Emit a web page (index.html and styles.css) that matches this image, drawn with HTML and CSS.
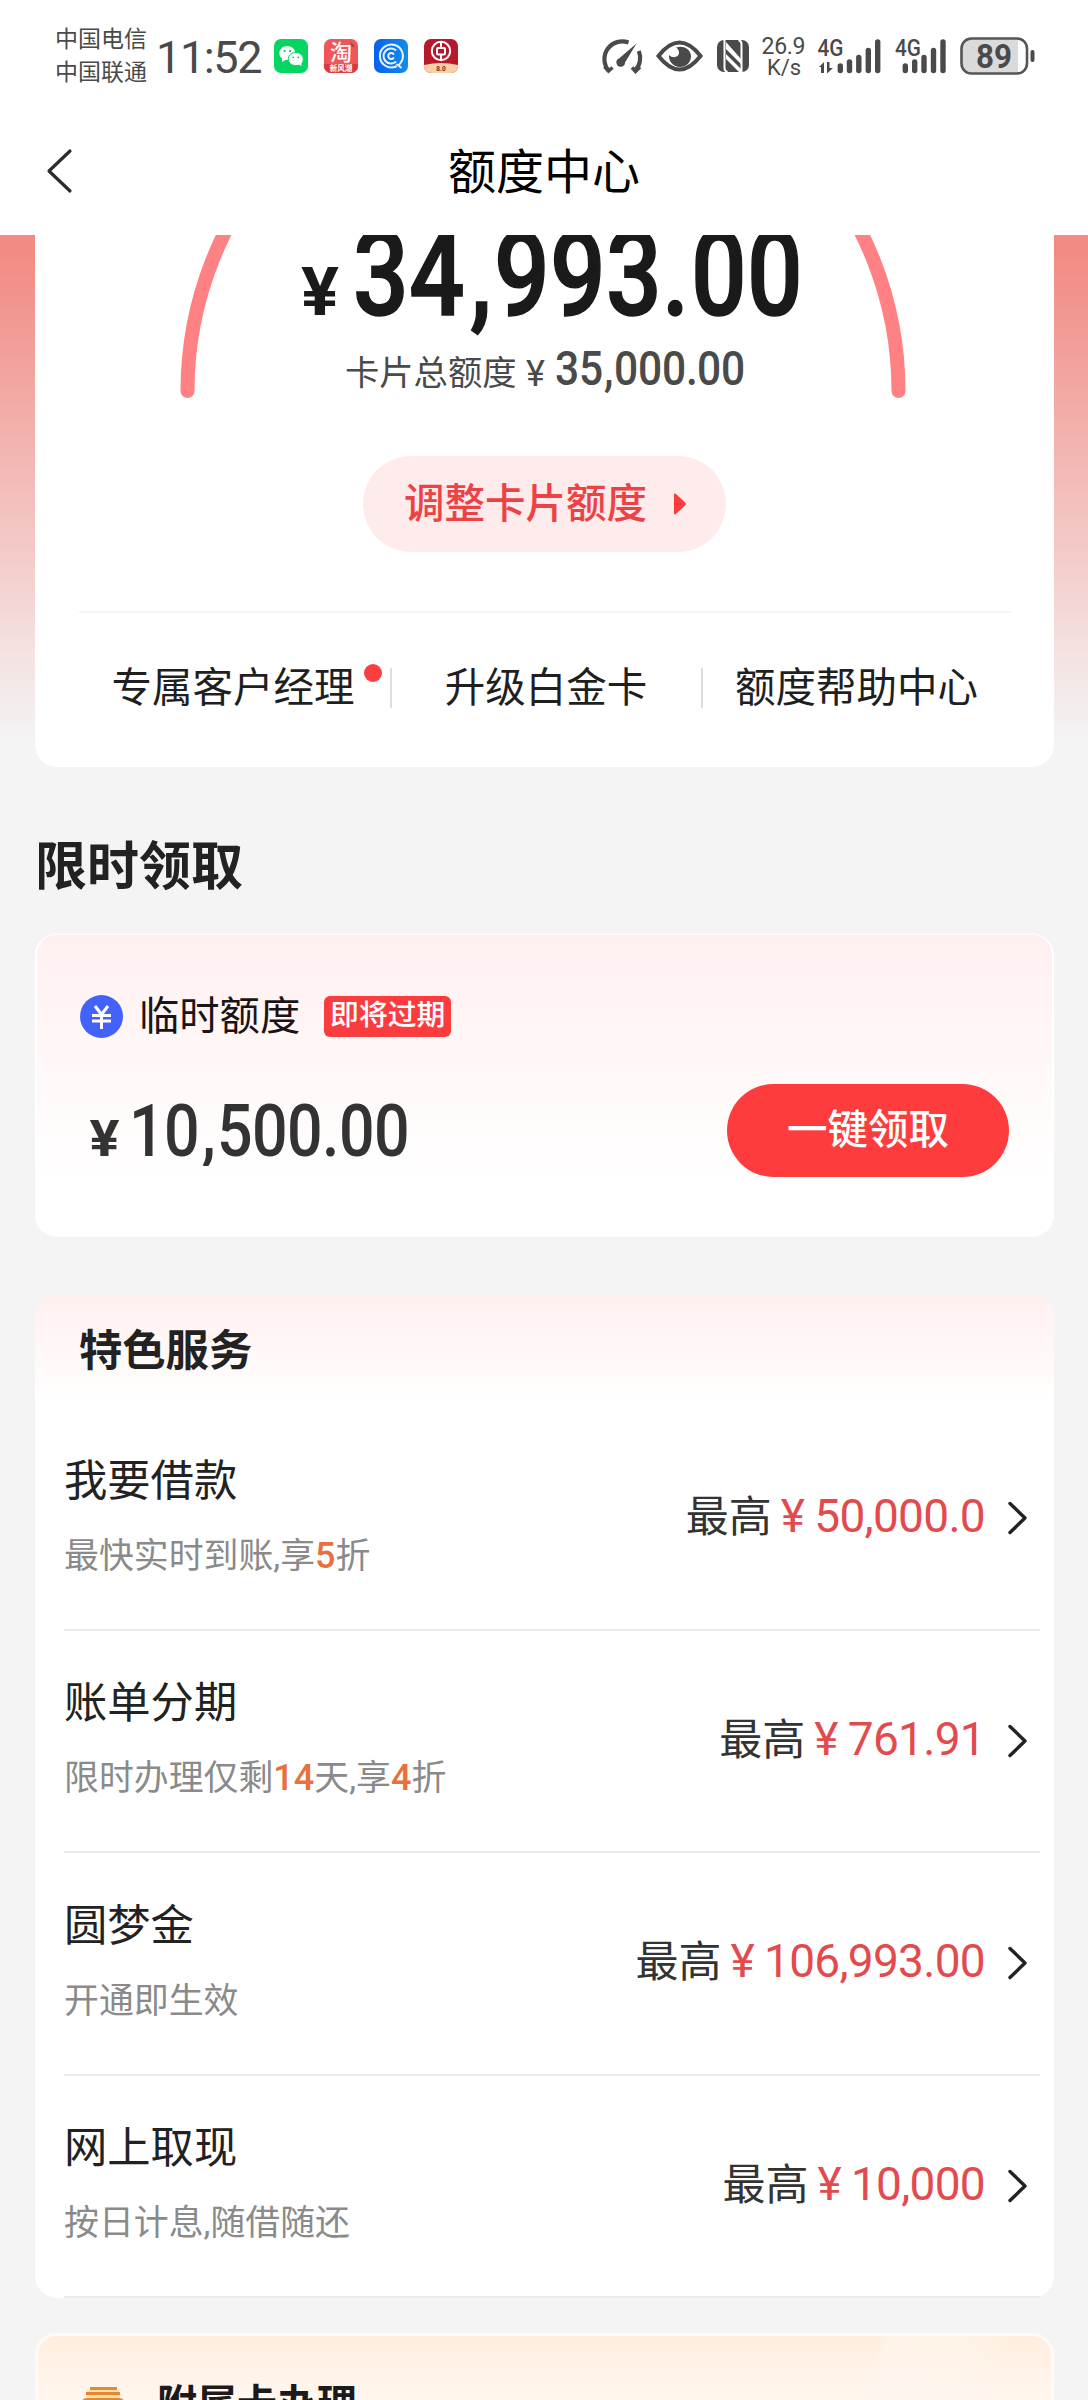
FILE: index.html
```html
<!DOCTYPE html>
<html lang="zh-CN">
<head>
<meta charset="utf-8">
<title>额度中心</title>
<link rel="stylesheet" href="styles.css">
</head>
<body>
<div class="screen">
  <header class="top">
    <div class="status">
      <div class="carriers"><span>中国电信</span><span>中国联通</span></div>
      <div class="clock">11:52</div>
      <div class="apps">
        <svg width="34" height="34" viewBox="0 0 34 34"><rect width="34" height="34" rx="7" fill="#07d562"/><ellipse cx="13.200" cy="14" rx="8" ry="7" fill="#fff"/><path d="M8 19v4l5-3z" fill="#fff"/><ellipse cx="21.800" cy="20" rx="7.600" ry="6.600" fill="#fff" stroke="#07d562"/><path d="M24 25l3.500 2v-4z" fill="#fff"/><g fill="#07c45b"><circle cx="10.500" cy="12" r="1.100"/><circle cx="16" cy="12" r="1.100"/><circle cx="19.400" cy="18.300" r=".9"/><circle cx="24.200" cy="18.300" r=".9"/></g></svg>
        <svg width="34" height="34" viewBox="0 0 34 34"><rect width="34" height="34" rx="7" fill="#f0555a"/><path d="M0 25h34v2a7 7 0 0 1-7 7H7a7 7 0 0 1-7-7z" fill="#d93a40"/><path d="M26 3l5 4-3 1z" fill="#96453c"/><text class="glyph" x="17" y="21" font-size="22" text-anchor="middle" font-weight="500">淘</text><text class="glyph" x="17" y="32" font-size="7.500" text-anchor="middle" font-weight="700">新风潮</text></svg>
        <svg width="34" height="34" viewBox="0 0 34 34"><defs><linearGradient id="blue"><stop stop-color="#0761f2"/><stop offset="1" stop-color="#118dea"/></linearGradient></defs><rect width="34" height="34" rx="7" fill="url(#blue)"/><g fill="none" stroke="#e6f5fd" stroke-width="2" stroke-linecap="round"><path d="M22 27.500A11.500 11.500 0 1 1 26.500 24l-1.500 2"/><path d="M21.500 23a7.500 7.500 0 1 1 0-12"/><path d="M19.500 19a3 3 0 1 1 0-4"/><path d="M23 25.500l4 3"/></g></svg>
        <svg width="34" height="34" viewBox="0 0 34 34"><rect width="34" height="34" rx="7" fill="#b8182b"/><path d="M0 26q17-4 34 0v1a7 7 0 0 1-7 7H7a7 7 0 0 1-7-7z" fill="#f7d0a5"/><g fill="none" stroke="#fff" stroke-width="2"><circle cx="17" cy="12" r="9.200"/><rect x="13" y="9" width="8" height="6.500" rx="1"/><path d="M17 3v6M17 15.500v6"/></g><text x="17" y="31.500" font-size="6.500" text-anchor="middle" font-weight="700" fill="#7c2a20">8.0</text></svg>
      </div>
      <svg class="sys" width="440" height="52" viewBox="598 30 440 52" fill="#4a4a4a">
        <g fill="none" stroke="#4a4a4a" stroke-width="4.200"><path d="M607.500 70.500A17.800 17.800 0 0 1 627.500 42.500"/><path d="M637.800 51A17.800 17.800 0 0 1 634 70.500"/><path d="M603.500 66.500l4 4.500 4-3.500M639 67l-4.500 4.500-3.500-4" stroke-width="3.500"/></g>
        <path d="M635.500 43.500L624 62.500a4.300 4.300 0 1 1-6-4z"/>
        <path d="M657.500 56q21-27 42 0q-21 27-42 0z" fill="none" stroke="#4a4a4a" stroke-width="4"/>
        <path d="M675 47.500c8-3 15.500 2.500 15 9.500a11 11 0 0 1-22-2c4 4 10 2 10-2.500 0-2-1-4-3-5z"/>
        <rect x="716" y="40" width="32" height="32" rx="7"/>
        <path d="M723.500 40v28q0 3 3 4M740.500 72V44q0-3-3-4" fill="none" stroke="#fff" stroke-width="2"/><path d="M725 42l15 17v5L725 49zM725 54l15 15v3h-2L725 59z" fill="#fff"/>
        <g class="net"><text x="760.500" y="53.500" font-size="23" textLength="44">26.9</text><text x="766" y="74.500" font-size="22" textLength="34">K/s</text></g>
        <text x="816.500" y="56" font-size="23.500" font-weight="500" textLength="26" lengthAdjust="spacingAndGlyphs">4G</text>
        <path d="M818 67l5-5v11h-3v-6zM826 62h2.500v6h3.500l-6 5.500z"/>
        <g stroke="#4a4a4a" stroke-width="5.400" stroke-linecap="round"><path d="M839.300 66v4.500M848.500 62v8.500M857.800 57.500v13M867.300 50.500v20M876.700 42v28.500"/><path d="M904.300 66v4.500M913.700 62v8.500M923 57.500v13M932.500 50.500v20M942 42v28.500"/></g>
        <text x="894" y="56" font-size="23.500" font-weight="500" textLength="26" lengthAdjust="spacingAndGlyphs">4G</text>
        <path d="M1017 39v34H971a10 10 0 0 1-10-10V49a10 10 0 0 1 10-10z" fill="#dadada"/>
        <rect x="960.500" y="38.500" width="65.500" height="35" rx="10" fill="none" stroke="#555" stroke-width="2.600"/><rect x="1029.500" y="50" width="4" height="12" rx="2"/>
        <text x="975" y="68" font-size="33" font-weight="700" textLength="36" lengthAdjust="spacingAndGlyphs">89</text>
      </svg>
    </div>
    <div class="nav">
      <svg class="back" width="28" height="48" viewBox="0 0 28 48"><path d="M25 4L4 24l21 20" fill="none" stroke="#2c2c2c" stroke-width="3.200" stroke-linejoin="round" stroke-linecap="round"/></svg>
      <h1>额度中心</h1>
    </div>
  </header>

  <main>
    <section class="card quota">
      <svg class="gauge" width="1019" height="165" viewBox="35 235 1019 165">
        <path d="M187.500 391A355.500 355.500 0 0 1 898.500 391" fill="none" stroke="#ff8183" stroke-width="14" stroke-linecap="round"/>
        <g fill="#1a1a1a" transform="translate(301 315)"><text font-size="66" font-weight="700" textLength="38" lengthAdjust="spacingAndGlyphs">¥</text></g>
        <text class="din strong" font-size="118" transform="translate(353 315) scale(.83 1)" x="0 67.500 141 170 237.300 304.800 372.300 407.200 474.700">34,993.00</text>
        <text class="cjk" x="345" y="385" font-size="34.300" fill="#4a4a4a">卡片总额度</text>
        <text x="526" y="385.500" font-size="36" fill="#4a4a4a">¥</text>
        <text class="din" fill="#4a4a4a" font-size="48.500" transform="translate(555 385) scale(.877 1)" x="0 27.400 56 67.300 94.600 122 149.400 162 189.300">35,000.00</text>
      </svg>
      <a class="adjust">调整卡片额度<svg width="12" height="22" viewBox="0 0 12 22"><path d="M0 1.500Q0 0 2 1L11 9.500Q12.500 11 11 12.500L2 21Q0 22 0 20z" fill="#fb3a3c"/></svg></a>
      <nav class="links">
        <a><span class="dotted">专属客户经理</span></a><a>升级白金卡</a><a>额度帮助中心</a>
      </nav>
    </section>

    <h2>限时领取</h2>

    <section class="card temp">
      <div class="temp-head">
        <svg width="43" height="43" viewBox="0 0 43 43"><circle cx="21.500" cy="21.500" r="21.500" fill="#4262fb"/><path d="M15 11l6.500 8.500L28 11M12 20.500h19M12 26h19M21.500 20v14" fill="none" stroke="#fff" stroke-width="3"/></svg>
        <span class="temp-name">临时额度</span><span class="tag">即将过期</span>
      </div>
      <div class="temp-body">
        <svg width="320" height="70" viewBox="88 1095 320 70" fill="#333">
          <text x="89.500" y="1155" font-size="50" font-weight="700" textLength="30" lengthAdjust="spacingAndGlyphs">¥</text>
          <text class="din" font-size="71.500" transform="translate(129 1155) scale(.877 1)" x="0 39.900 83 100.300 140.300 180.200 220 239.500 279.400">10,500.00</text>
        </svg>
        <button>一键领取</button>
      </div>
    </section>

    <section class="card services">
      <h3>特色服务</h3>
      <div class="row"><div><b>我要借款</b><p>最快实时到账,享<em>5</em>折</p></div><div class="max">最高<i>¥</i><span>50,000.0</span></div><svg class="go" width="20" height="36" viewBox="0 0 20 36"><path d="M2 3.500L17 18 2 32.500"/></svg></div>
      <div class="row"><div><b>账单分期</b><p>限时办理仅剩<em>14</em>天,享<em>4</em>折</p></div><div class="max">最高<i>¥</i><span>761.91</span></div><svg class="go" width="20" height="36" viewBox="0 0 20 36"><path d="M2 3.500L17 18 2 32.500"/></svg></div>
      <div class="row"><div><b>圆梦金</b><p>开通即生效</p></div><div class="max">最高<i>¥</i><span>106,993.00</span></div><svg class="go" width="20" height="36" viewBox="0 0 20 36"><path d="M2 3.500L17 18 2 32.500"/></svg></div>
      <div class="row"><div><b>网上取现</b><p>按日计息,随借随还</p></div><div class="max">最高<i>¥</i><span>10,000</span></div><svg class="go" width="20" height="36" viewBox="0 0 20 36"><path d="M2 3.500L17 18 2 32.500"/></svg></div>
    </section>

    <section class="card extra">
      <svg width="44" height="36" viewBox="0 0 44 36"><path d="M6 3h32l4 33H2z" fill="#ffdda6"/><path d="M9 0h27v3H9zM5 5h34v3H5zM1 14q1-3 5-3h32q4 0 5 3v22H1z" fill="#e08a35"/></svg>
      <span>附属卡办理</span>
    </section>
  </main>
</div>
</body>
</html>
```
FILE: styles.css
```css
* { box-sizing: border-box; margin: 0; padding: 0; }
body { background: #f4f4f4; font-family: Roboto, "Noto Sans CJK SC", sans-serif; color: #222; }
svg { display: block; flex: none; }
svg text { font-family: Roboto, "Noto Sans CJK SC", sans-serif; }
svg .glyph { fill: #fff; font-family: "Noto Sans CJK SC", sans-serif; }
svg .cjk { font-family: "Noto Sans CJK SC", sans-serif; }
svg .din { font-weight: 500; }
svg .strong { fill: #1a1a1a; stroke: #1a1a1a; stroke-width: 1.500px; }
.net text { font-weight: 400; }

.screen { width: 1088px; height: 2400px; overflow: hidden; }

.top { height: 235px; background: #fff; }
.status { height: 112px; display: flex; align-items: center; padding-left: 55px; color: #4a4a4a; }
.carriers { display: flex; flex-direction: column; width: 100px; font-size: 23px; line-height: 33px; white-space: nowrap; }
.clock { width: 119px; font-size: 45px; letter-spacing: -1.4px; line-height: 50px; padding: 3px 0 0 1px; }
.apps { display: flex; gap: 16px; }
.sys { margin-left: 141px; }
.nav { height: 118px; display: grid; grid-template-columns: 90px 1fr 90px; align-items: center; }
.back { margin-left: 45px; }
.nav h1 { font-size: 48px; font-weight: 400; color: #000; text-align: center; line-height: 60px; padding-top: 3px; }

main { height: 2165px; padding: 0 34px 0 35px; display: flex; flex-direction: column; background: linear-gradient(#f38b84 0, #f28b85 20px, #f3ccca 325px, #f3e3e2 420px, #f3eeee 480px, #f4f4f4 505px); }
.card { background: #fff; border-radius: 22px; flex: none; }

.quota { height: 532px; border-radius: 0 0 22px 22px; display: flex; flex-direction: column; align-items: center; }
.adjust { margin-top: 56px; width: 363px; height: 96px; border-radius: 48px; background: #feebec; color: #ed4245; font-size: 40.500px; font-weight: 500; display: flex; align-items: center; justify-content: center; gap: 27px; padding: 0 0 8px 1px; }
.adjust svg { margin-top: 8px; }
.links { width: 932px; margin-top: 59px; padding-top: 55px; border-top: 2px solid #f6f6f6; display: grid; grid-template-columns: 311px 311px 310px; }
.links a { text-align: center; font-size: 40.500px; line-height: 40px; color: #1f1f1f; white-space: nowrap; }
.links a + a { border-left: 2px solid #ddd; }
.dotted { position: relative; left: -1px; }
.dotted::after { content: ""; position: absolute; right: -27px; top: 0; width: 18px; height: 18px; border-radius: 50%; background: #fb3e40; }

h2 { margin: 64px 0 0; padding-top: 4px; font-size: 52px; line-height: 66px; font-weight: 700; color: #222; }

.temp { margin-top: 32px; height: 304px; border: 2px solid #fff; border-color: #fffafa #fff #fff; background: linear-gradient(#fff0f0, #fff 82%); padding: 60px 43px 0; }
.temp-head { display: flex; align-items: center; height: 43px; color: #1a1414; }
.temp-name { font-size: 40.300px; line-height: 40px; margin: 0 24px 0 16px; }
.tag { width: 127px; height: 41px; border-radius: 6px; background: #fb3c3e; color: #fff; font-size: 28.800px; font-weight: 500; line-height: 39px; text-align: center; }
.temp-body { display: flex; justify-content: space-between; align-items: center; margin-top: 46px; padding-left: 8px; }
.temp-body button { width: 282px; height: 93px; border: 0; border-radius: 47px; background: #ff3c3d; color: #fff; font: 500 40.500px/80px Roboto, "Noto Sans CJK SC", sans-serif; padding: 0 0 2px; }

.services { margin-top: 58px; height: 1003px; background: linear-gradient(#fff0f0, #fff 110px); display: flex; flex-direction: column; }
h3 { height: 113px; padding: 27px 0 0 44px; font-size: 43.300px; line-height: 60px; font-weight: 700; }
.row { height: 222.500px; margin: 0 14px 0 29px; border-bottom: 2px solid #ebebeb; display: flex; align-items: center; }
.row > div:first-child { flex: 1; }
.row b { display: block; font-weight: 400; font-size: 43.300px; line-height: 60px; color: #222; margin-top: -3px; }
.row p { font-size: 34.900px; line-height: 50px; color: #8a8a8a; margin-top: 20px; }
.row em { font-style: normal; font-weight: 500; color: #e8703c; font-size: 36px; line-height: 1; }
.max { font-size: 43px; color: #333; line-height: 60px; margin-top: -3px; white-space: nowrap; }
.max i, .max span { font-style: normal; font-size: 46px; letter-spacing: -.7px; color: #e34a4e; }
.max i { margin: 0 10px 0 9px; }
.go { margin: 0 12px 0 23px; fill: none; stroke: #222; stroke-width: 3.400; stroke-linecap: round; stroke-linejoin: round; }

.extra { margin-top: 35px; height: 200px; border: 3px solid #fffaf5; background: linear-gradient(105deg, transparent 79%, #fff6ee99 80%, #fff6ee88 87%, transparent 92%) no-repeat, linear-gradient(#ffeedf, #fffaf5 90px); display: flex; align-items: flex-start; padding: 51px 0 0 43px; gap: 32px; }
.extra span { font-size: 40px; line-height: 40px; font-weight: 700; color: #1b1b1b; margin-top: -2px; }
```
